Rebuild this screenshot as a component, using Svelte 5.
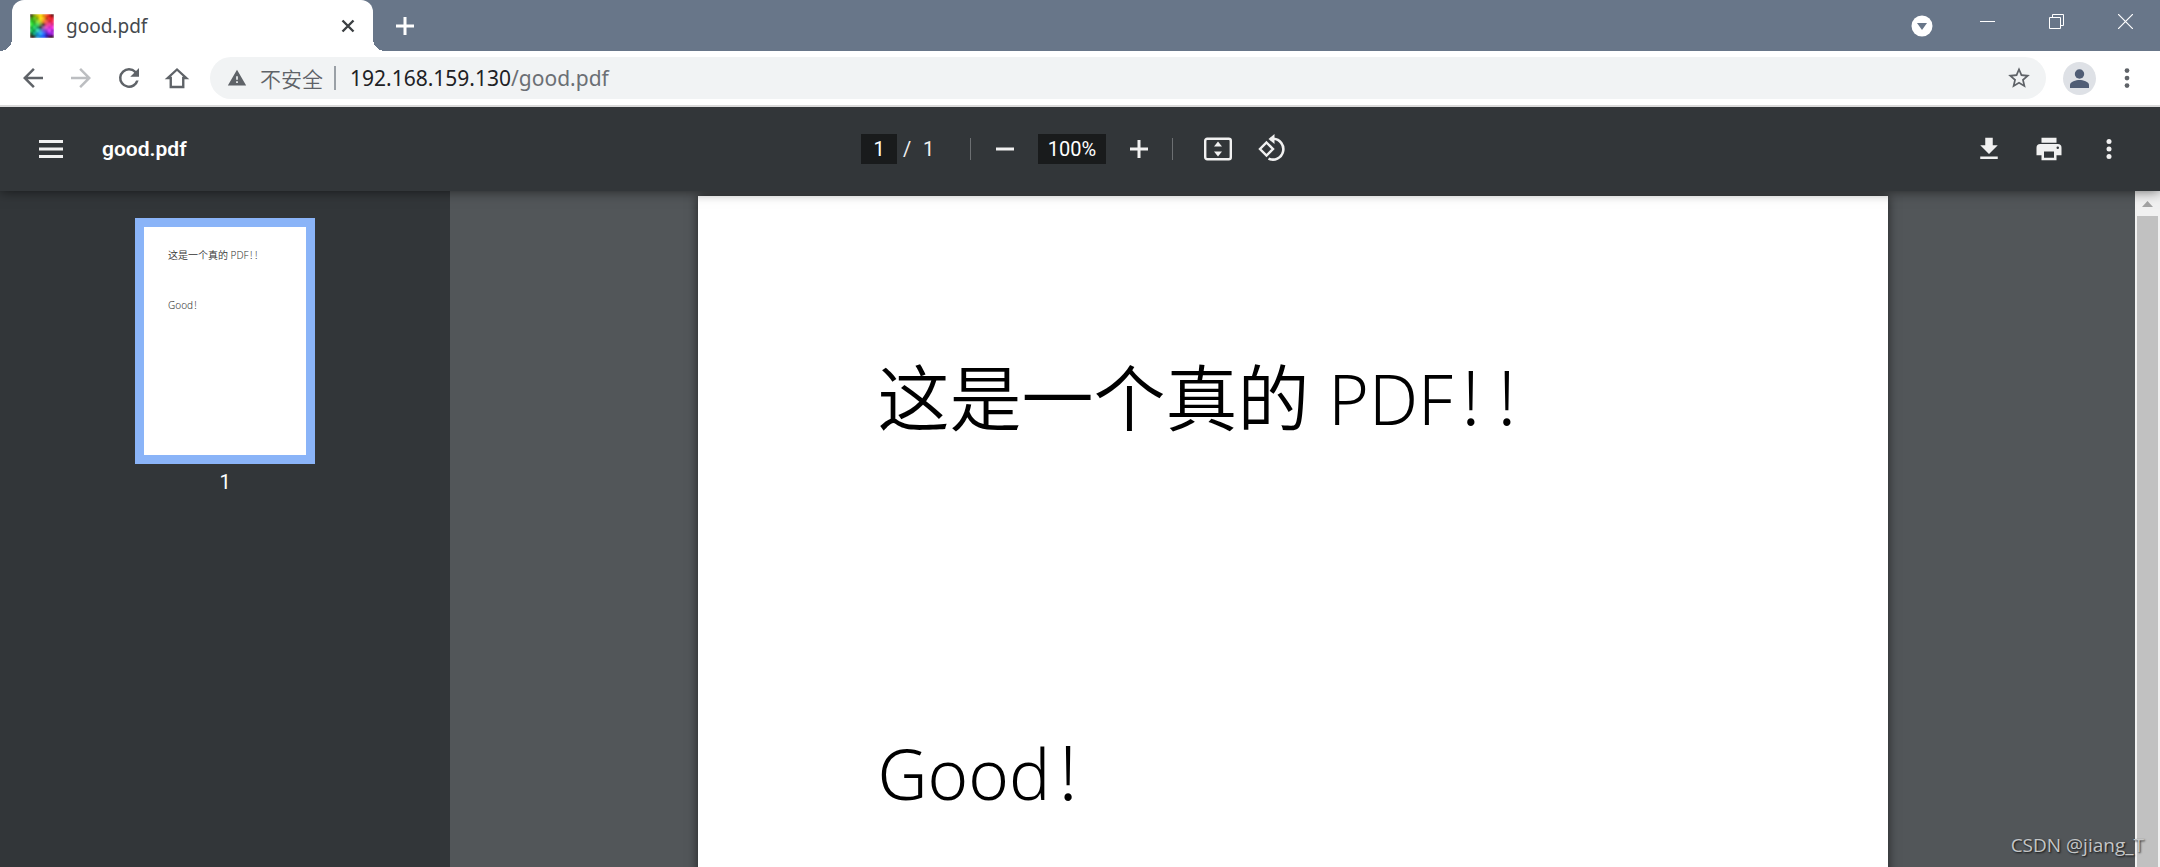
<script>
  let pageNumber = "1";
  let zoom = "100%";

  const file = "good.pdf";
  const host = "192.168.159.130";

  // favicon, one colour per cell
  const favicon = [
    ["#2a0500", "#7f9a00", "#c9c400", "#ffd800", "#d88a00", "#ff4a1c", "#c01010", "#3a0000"],
    ["#2f8a10", "#5fd020", "#7a9a10", "#ffe81a", "#ffb020", "#b04010", "#ff3030", "#e01c2c"],
    ["#1fc81c", "#3a9a20", "#8fe838", "#c8d020", "#f08828", "#ff5a50", "#c02030", "#ff2a58"],
    ["#38f038", "#22b030", "#4ce060", "#7a9850", "#200808", "#e04878", "#ff40a0", "#d02080"],
    ["#0a9a20", "#30e070", "#1c9060", "#180808", "#a068a0", "#f050d0", "#c02cc0", "#ff30e0"],
    ["#18c850", "#0a8a48", "#40e8c0", "#4098c8", "#6850d8", "#9030d0", "#e848ff", "#9010c0"],
    ["#085818", "#18b890", "#1080c0", "#30b8ff", "#3070ff", "#4028c0", "#8828e8", "#b020e0"],
    ["#280000", "#200808", "#1890c8", "#1070e0", "#1848ff", "#2010a0", "#300018", "#280000"],
  ];
</script>

<div class="window">
  <header class="tabStrip">
    <div class="tab">
      <svg class="favicon" viewBox="0 0 8 8" aria-hidden="true">
        <filter id="soft" x="0" y="0" width="1" height="1"><feGaussianBlur stdDeviation="0.35" edgeMode="duplicate" /></filter>
        <g filter="url(#soft)">
          {#each favicon as row, y}
            {#each row as color, x}
              <rect {x} {y} width="1" height="1" fill={color} />
            {/each}
          {/each}
        </g>
      </svg>
      <span class="tabTitle">{file}</span>
      <button class="tabClose" aria-label="Close tab">
        <svg width="14" height="14" viewBox="0 0 14 14"><path d="M1.5 1.5l11 11M12.5 1.5l-11 11" fill="none" stroke="#3c4043" stroke-width="2.4" /></svg>
      </button>
    </div>
    <button class="newTab" aria-label="New tab">
      <svg width="18" height="18" viewBox="0 0 18 18"><path d="M9 0v18M0 9h18" stroke="#fff" stroke-width="3" /></svg>
    </button>
    <div class="windowButtons">
      <button class="tabSearch" aria-label="Search tabs">
        <svg width="22" height="22" viewBox="0 0 22 22"><circle cx="11" cy="11" r="10.5" fill="#fff" /><path d="M6 8h10l-5 7z" fill="#687689" /></svg>
      </button>
      <button aria-label="Minimize">
        <svg width="15" height="15" viewBox="0 0 15 15"><path d="M0 7.5h15" stroke="#fff" /></svg>
      </button>
      <button aria-label="Restore">
        <svg width="15" height="15" viewBox="0 0 15 15"><path d="M.5 3.5h11v11H.5zM3.5 3.5v-3h11v11h-3" fill="none" stroke="#fff" /></svg>
      </button>
      <button aria-label="Close">
        <svg width="15" height="15" viewBox="0 0 15 15"><path d="M0 0l15 15M15 0L0 15" stroke="#fff" stroke-width="1.2" /></svg>
      </button>
    </div>
  </header>

  <nav class="addressRow">
    <button aria-label="Back">
      <svg class="icon" viewBox="0 0 24 24"><path d="M20 11H7.83l5.59-5.59L12 4l-8 8 8 8 1.41-1.41L7.83 13H20z" /></svg>
    </button>
    <button class="faded" aria-label="Forward" disabled>
      <svg class="icon" viewBox="0 0 24 24"><path d="M12 4l-1.41 1.41L16.17 11H4v2h12.17l-5.58 5.59L12 20l8-8z" /></svg>
    </button>
    <button aria-label="Reload">
      <svg class="icon" viewBox="0 0 24 24"><path d="M17.65 6.35A7.96 7.96 0 0 0 12 4a8 8 0 1 0 7.73 10h-2.08A6 6 0 1 1 12 6c1.66 0 3.14.69 4.22 1.78L13 11h7V4z" /></svg>
    </button>
    <button aria-label="Home">
      <svg class="icon" viewBox="0 0 24 24"><path d="M12 5.2L4.6 12H7v7.2h10V12h2.4z" fill="none" stroke="currentColor" stroke-width="1.9" /></svg>
    </button>
    <div class="omnibox">
      <svg class="warning" viewBox="0 0 24 24"><path d="M1 21h22L12 2zm12-3h-2v-2h2zm0-4h-2v-4h2z" /></svg>
      <span class="security">不安全</span>
      <span class="bar"></span>
      <a class="url" href="#top">{host}<span>/{file}</span></a>
      <button class="star" aria-label="Bookmark this page">
        <svg viewBox="0 0 24 24"><path d="M22 9.24l-7.19-.62L12 2 9.19 8.63 2 9.24l5.46 4.73L5.82 21 12 17.27 18.18 21l-1.63-7.03zM12 15.4l-3.76 2.27 1-4.28-3.32-2.88 4.38-.38L12 6.1l1.71 4.04 4.38.38-3.32 2.88 1 4.28z" /></svg>
      </button>
    </div>
    <button class="profile" aria-label="Profile">
      <svg viewBox="0 0 33 33"><circle cx="16.5" cy="16.5" r="16.5" fill="#dee1e6" /><circle cx="16.5" cy="12" r="4.7" fill="#505d75" /><path d="M7 26v-3c0-3.2 6-5 9.5-5s9.5 1.8 9.5 5v3z" fill="#505d75" /></svg>
    </button>
    <button aria-label="Menu">
      <svg class="icon" viewBox="0 0 24 24"><circle cx="12" cy="6" r="1.9" /><circle cx="12" cy="12" r="1.9" /><circle cx="12" cy="18" r="1.9" /></svg>
    </button>
  </nav>

  <div class="pdfBar">
    <div class="left">
      <button aria-label="Toggle sidebar">
        <svg class="icon" viewBox="0 0 30 30"><path d="M3 6h24v3H3zM3 13.5h24v3H3zM3 21h24v3H3z" /></svg>
      </button>
      <h1>{file}</h1>
    </div>
    <div class="middle">
      <input class="pageInput" type="text" aria-label="Page number" bind:value={pageNumber} />
      <span class="slash">/</span>
      <span class="total">1</span>
      <span class="divider"></span>
      <button aria-label="Zoom out">
        <svg class="icon" viewBox="0 0 30 30"><path d="M6 13.5h18v3H6z" /></svg>
      </button>
      <input class="zoomInput" type="text" aria-label="Zoom level" bind:value={zoom} />
      <button aria-label="Zoom in">
        <svg class="icon" viewBox="0 0 30 30"><path d="M13.5 6h3v7.5H24v3h-7.5V24h-3v-7.5H6v-3h7.5z" /></svg>
      </button>
      <span class="divider wide"></span>
      <button aria-label="Fit to page">
        <svg class="icon" viewBox="0 0 30 30"><rect x="2.2" y="4.7" width="25.6" height="20.6" rx="2" fill="none" stroke="currentColor" stroke-width="2.4" /><path d="M15 7.5l4 5h-8zM15 22.5l-4-5h8z" /></svg>
      </button>
      <button aria-label="Rotate">
        <svg class="icon" viewBox="0 0 30 30"><path d="M9.5 8.5l6.5 6.5-6.5 6.5L3 15z" fill="none" stroke="currentColor" stroke-width="2.4" /><path d="M16.5 4.8a10.4 10.4 0 1 1-5 19.8" fill="none" stroke="currentColor" stroke-width="2.6" /><path d="M17.5 0v10l-6-5z" /></svg>
      </button>
    </div>
    <div class="right">
      <button aria-label="Download">
        <svg class="icon" viewBox="0 0 24 24"><path d="M19 9h-4V3H9v6H5l7 7zM5 18v2h14v-2z" /></svg>
      </button>
      <button aria-label="Print">
        <svg class="icon" viewBox="0 0 24 24"><path d="M19 8H5a3 3 0 0 0-3 3v6h4v4h12v-4h4v-6a3 3 0 0 0-3-3zm-3 11H8v-5h8zm3-7a1 1 0 1 1 0-2 1 1 0 0 1 0 2zM18 3H6v4h12z" /></svg>
      </button>
      <button aria-label="More actions">
        <svg class="icon" viewBox="0 0 24 24"><circle cx="12" cy="6" r="2" /><circle cx="12" cy="12" r="2" /><circle cx="12" cy="18" r="2" /></svg>
      </button>
    </div>
  </div>

  <main>
    <aside>
      <button class="thumb" aria-label="Page 1">
        <span>这是一个真的 PDF<i>!</i><i>!</i></span>
        <span>Good<i>!</i></span>
      </button>
      <span class="thumbLabel">1</span>
    </aside>
    <section class="viewer">
      <article class="page">
        <p>这是一个真的 <span>PDF</span><i>!</i><i>!</i></p>
        <p><span>Good</span><i>!</i></p>
      </article>
    </section>
    <div class="scrollbar">
      <svg viewBox="0 0 25 25"><path d="M7 16l5.5-6 5.5 6z" fill="#a3a3a3" /></svg>
      <div class="scrollThumb"></div>
    </div>
  </main>

  <span class="watermark">CSDN @jiang_T</span>
</div>

<style>
  :global(body) {
    margin: 0;
  }

  .window {
    position: relative;
    display: flex;
    flex-direction: column;
    height: 100vh;
    overflow: hidden;
    font-family: "Noto Sans", "Noto Sans CJK SC", sans-serif;
  }

  button {
    display: flex;
    align-items: center;
    justify-content: center;
    flex-shrink: 0;
    padding: 0;
    border: none;
    background: none;
    color: inherit;
    font: inherit;
  }

  svg {
    display: block;
    fill: currentColor;
  }

  .icon {
    width: 30px;
    height: 30px;
  }

  .tabStrip {
    display: flex;
    align-items: center;
    height: 51px;
    padding-left: 12px;
    background: #687689;
  }

  .tab {
    position: relative;
    display: flex;
    align-items: center;
    width: 361px;
    height: 51px;
    padding: 0 18px;
    box-sizing: border-box;
    border-radius: 12px 12px 0 0;
    background: #fff;
    color: #45494d;
  }

  /* flared feet of the tab */
  .tab::before,
  .tab::after {
    content: "";
    position: absolute;
    bottom: 0;
    width: 12px;
    height: 12px;
  }

  .tab::before {
    right: 100%;
    background: radial-gradient(circle at 0 0, transparent 12px, #fff 12px);
  }

  .tab::after {
    left: 100%;
    background: radial-gradient(circle at 100% 0, transparent 12px, #fff 12px);
  }

  .favicon {
    width: 24px;
    height: 24px;
    margin-right: 12px;
  }

  .tabTitle {
    flex: 1;
    font-size: 19px;
    line-height: 24px;
  }

  .newTab {
    width: 42px;
    height: 42px;
    margin-left: 11px;
  }

  .windowButtons {
    display: flex;
    align-self: flex-start;
    margin-left: auto;
  }

  .windowButtons button {
    width: 69px;
    height: 43px;
  }

  .windowButtons .tabSearch {
    width: 63px;
    height: 51px;
  }

  .addressRow {
    position: relative;
    z-index: 2;
    display: flex;
    align-items: center;
    gap: 6px;
    height: 54px;
    padding: 0 12px;
    border-bottom: 2px solid #dadada;
    background: #fff;
    color: #5f6368;
  }

  .addressRow > button {
    width: 42px;
    height: 42px;
  }

  .addressRow .faded {
    color: #bcbec1;
  }

  .omnibox {
    display: flex;
    flex: 1;
    align-items: center;
    height: 42px;
    margin: 0 6px;
    padding: 0 14px 0 17px;
    border-radius: 21px;
    background: #f1f3f4;
    font-size: 21px;
  }

  .warning {
    width: 20px;
    height: 20px;
    margin-right: 13px;
  }

  .security {
    font-weight: 350;
  }

  .bar {
    width: 2px;
    height: 24px;
    margin: 0 14px 0 11px;
    background: #9aa0a6;
  }

  .url {
    flex: 1;
    color: #202124;
    text-decoration: none;
  }

  .url span {
    color: #6b6f74;
  }

  .star svg {
    width: 26px;
    height: 26px;
  }

  .profile svg {
    width: 33px;
    height: 33px;
  }

  .pdfBar {
    position: relative;
    z-index: 1;
    display: grid;
    grid-template-columns: 1fr auto 1fr;
    align-items: center;
    flex-shrink: 0;
    height: 84px;
    padding: 0 24px;
    box-shadow: 0 0 12px rgba(0, 0, 0, 0.6);
    background: #323639;
    color: #f1f1f1;
    font-family: Roboto, sans-serif;
    font-size: 20px;
  }

  .pdfBar button {
    width: 54px;
    height: 54px;
  }

  .left,
  .middle,
  .right {
    display: flex;
    align-items: center;
  }

  .left {
    gap: 24px;
  }

  .right {
    justify-content: flex-end;
    gap: 6px;
  }

  h1 {
    margin: 0;
    color: #fff;
    font-size: 21px;
    font-weight: 600;
  }

  input {
    height: 30px;
    padding: 0;
    box-sizing: border-box;
    border: none;
    outline: none;
    background: #191b1c;
    color: #fff;
    font: inherit;
    text-align: center;
  }

  .pageInput {
    width: 36px;
  }

  .zoomInput {
    width: 68px;
    margin: 0 6px;
  }

  .slash {
    width: 26px;
    padding-left: 6px;
    box-sizing: border-box;
  }

  .total {
    width: 47px;
  }

  .divider {
    width: 1px;
    height: 22px;
    margin-right: 7px;
    background: #6c6f72;
  }

  .divider.wide {
    margin: 0 18px 0 6px;
  }

  main {
    display: flex;
    flex: 1;
    min-height: 0;
    background: #525659;
  }

  aside {
    display: flex;
    flex-direction: column;
    align-items: center;
    width: 450px;
    padding-top: 27px;
    box-sizing: border-box;
    background: #323639;
    color: #fff;
  }

  .thumb {
    flex-direction: column;
    align-items: flex-start;
    justify-content: flex-start;
    gap: 36px;
    width: 180px;
    height: 246px;
    padding: 21px 0 0 24px;
    border: 9px solid #8ab4f8;
    background: #fff;
    color: #333;
    font-size: 10px;
    font-weight: 350;
    line-height: 14px;
  }

  .thumbLabel {
    margin-top: 6px;
    font-family: Roboto, sans-serif;
    font-size: 20px;
    line-height: 24px;
  }

  .viewer {
    flex: 1;
    overflow: hidden;
  }

  .page {
    width: 1190px;
    height: 1684px;
    margin: 5px auto 0;
    padding: 149px 0 0 180px;
    box-sizing: border-box;
    box-shadow: 0 0 10px rgba(0, 0, 0, 0.6);
    background: #fff;
    color: #000;
    font-size: 72px;
    font-weight: 350;
    line-height: 105px;
  }

  .page p {
    margin: 0 0 270px;
  }

  .page p span {
    font-size: 69px;
    font-weight: 300;
    line-height: 1;
  }

  /* exclamation marks take half an em */
  i {
    display: inline-block;
    width: 0.5em;
    font-family: "Noto Sans CJK SC", sans-serif;
    font-style: normal;
    font-weight: 300;
    line-height: 1;
    text-align: center;
  }

  .scrollbar {
    display: flex;
    flex-direction: column;
    width: 25px;
    background: #f1f1f1;
  }

  .scrollThumb {
    flex: 1;
    margin: 0 2px;
    background: #c1c1c1;
  }

  .watermark {
    position: absolute;
    right: 16px;
    bottom: 8px;
    color: #c4c6c7;
    font-family: "Open Sans", sans-serif;
    font-size: 19px;
    line-height: 28px;
    text-shadow: 1px 1px 2px rgba(0, 0, 0, 0.8);
  }
</style>
